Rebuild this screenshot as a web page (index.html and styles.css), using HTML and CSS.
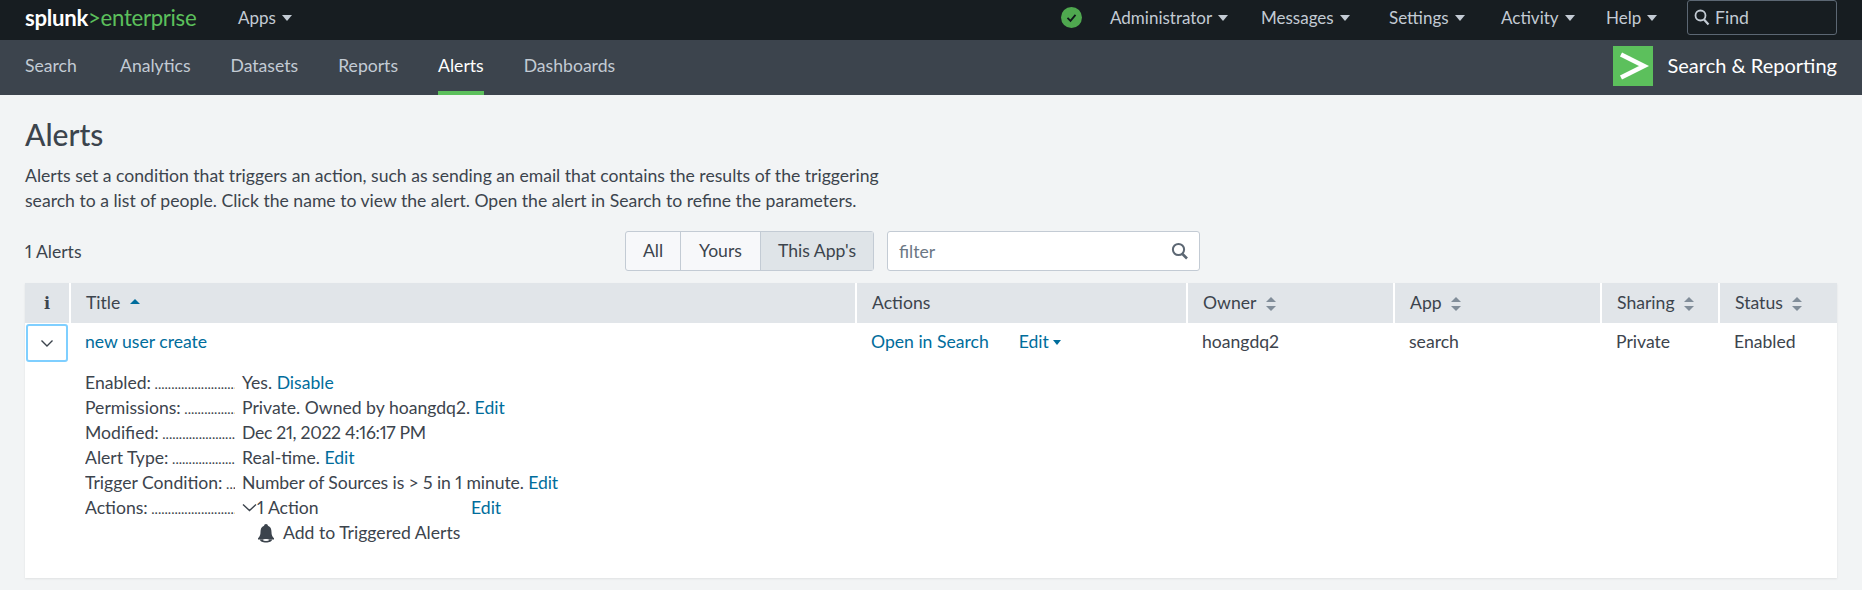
FILE: index.html
```html
<!DOCTYPE html>
<html lang="en">
<head>
    <meta charset="UTF-8">
    <meta name="viewport" content="width=device-width, initial-scale=1.0">
    <title>Alerts | Splunk</title>
    <link rel="stylesheet" href="styles.css">
</head>
<body>
    <header class="topbar">
        <a class="logo"><b>splunk</b><span>&gt;enterprise</span></a>
        <a class="top-link apps">Apps <i class="caret"></i></a>
        <div class="top-right">
            <svg class="status-ok" width="21" height="21" viewBox="0 0 21 21"><circle cx="10.5" cy="10.5" r="10.5" fill="#4fa84f"/><path d="M6.5 10.8l3 3 5-6" fill="none" stroke="#10181c" stroke-width="1.8"/></svg>
            <a class="top-link admin">Administrator <i class="caret"></i></a>
            <a class="top-link messages">Messages <i class="caret"></i></a>
            <a class="top-link settings">Settings <i class="caret"></i></a>
            <a class="top-link activity">Activity <i class="caret"></i></a>
            <a class="top-link help">Help <i class="caret"></i></a>
            <div class="find">
                <svg width="16" height="17" viewBox="0 0 16 17"><circle cx="6.5" cy="6.5" r="5" fill="none" stroke="#c3cbd4" stroke-width="1.8"/><path d="M10 10.5l4.5 5" stroke="#c3cbd4" stroke-width="2.2"/></svg>
                <span>Find</span>
            </div>
        </div>
    </header>
    <nav class="appbar">
        <a class="nav-item first">Search</a>
        <a class="nav-item">Analytics</a>
        <a class="nav-item">Datasets</a>
        <a class="nav-item">Reports</a>
        <a class="nav-item active">Alerts</a>
        <a class="nav-item">Dashboards</a>
        <div class="app-name">
            <div class="app-logo"><svg width="40" height="40" viewBox="0 0 40 40"><path d="M8 8.5l23 11.5-23 11.5" fill="none" stroke="#fff" stroke-width="4.5"/></svg></div>
            <span>Search &amp; Reporting</span>
        </div>
    </nav>
    <main class="page">
        <h1>Alerts</h1>
        <p class="intro">Alerts set a condition that triggers an action, such as sending an email that contains the results of the triggering<br>search to a list of people. Click the name to view the alert. Open the alert in Search to refine the parameters.</p>
        <div class="controls">
            <div class="count">1 Alerts</div>
            <div class="btn-group">
                <button class="btn btn-all">All</button>
                <button class="btn btn-yours">Yours</button>
                <button class="btn btn-app selected">This App's</button>
            </div>
            <div class="filter">
                <span>filter</span>
                <svg width="18" height="18" viewBox="0 0 18 18"><circle cx="7.5" cy="7.5" r="5.6" fill="none" stroke="#5c6773" stroke-width="2"/><path d="M11.5 12l4.5 4.5" stroke="#5c6773" stroke-width="2.6"/></svg>
            </div>
        </div>
        <table class="alerts">
            <colgroup>
                <col class="c-info"><col class="c-title"><col class="c-actions"><col class="c-owner"><col class="c-app"><col class="c-sharing"><col class="c-status">
            </colgroup>
            <thead>
                <tr>
                    <th class="info-head">i</th>
                    <th>Title <i class="sort-up"></i></th>
                    <th>Actions</th>
                    <th>Owner <i class="sort"></i></th>
                    <th>App <i class="sort"></i></th>
                    <th>Sharing <i class="sort"></i></th>
                    <th>Status <i class="sort"></i></th>
                </tr>
            </thead>
            <tbody>
                <tr class="main-row">
                    <td class="toggle-cell">
                        <div class="toggle"><svg width="14" height="9" viewBox="0 0 14 9"><path d="M1.5 1.5L7 7l5.5-5.5" fill="none" stroke="#3c444d" stroke-width="1.4"/></svg></div>
                    </td>
                    <td><a class="link">new user create</a></td>
                    <td class="actions-cell"><a class="link open">Open in Search</a><a class="link">Edit <i class="caret blue"></i></a></td>
                    <td>hoangdq2</td>
                    <td>search</td>
                    <td>Private</td>
                    <td>Enabled</td>
                </tr>
                <tr class="more-row">
                    <td></td>
                    <td colspan="6">
                        <dl class="details">
                            <dt>Enabled:</dt><dd>Yes. <a class="link">Disable</a></dd>
                            <dt>Permissions:</dt><dd>Private. Owned by hoangdq2. <a class="link">Edit</a></dd>
                            <dt>Modified:</dt><dd class="date">Dec 21, 2022 4:16:17 PM</dd>
                            <dt>Alert Type:</dt><dd>Real-time. <a class="link">Edit</a></dd>
                            <dt>Trigger Condition:</dt><dd class="trigger">Number of Sources is &gt; 5 in 1 minute. <a class="link">Edit</a></dd>
                            <dt>Actions:</dt>
                            <dd>
                                <div class="action-line">
                                    <svg width="15" height="9" viewBox="0 0 15 9"><path d="M1 1.5l6.5 6 6.5-6" fill="none" stroke="#3c444d" stroke-width="1.4"/></svg>
                                    <span class="action-count">1 Action</span>
                                    <a class="link">Edit</a>
                                </div>
                                <div class="action-item">
                                    <svg width="18" height="20" viewBox="0 0 18 20"><path d="M9 1c1.2 0 1.8.8 1.9 1.7C13.6 3.5 14.5 6 14.5 9c0 3 .7 4.5 2.5 6.3v1.2H1v-1.2C2.8 13.5 3.5 12 3.5 9c0-3 .9-5.5 3.6-6.3C7.2 1.800 7.800 1 9 1z" fill="#3c444d"/><path d="M3 16.5h12c0 1.8-2.500 3-6 3s-6-1.200-6-3z" fill="#3c444d"/><ellipse cx="9" cy="17" rx="3" ry="1" fill="#fff"/></svg>
                                    <span>Add to Triggered Alerts</span>
                                </div>
                            </dd>
                        </dl>
                    </td>
                </tr>
            </tbody>
        </table>
    </main>
</body>
</html>
```

FILE: styles.css
```css
* {
    box-sizing: border-box;
}
html, body {
    height: 100%;
}
body {
    margin: 0;
    background-color: #f2f4f5;
    color: #3c444d;
    font-family: Lato, "Open Sans", sans-serif;
    font-size: 17.6px;
    font-variant-numeric: proportional-nums;
    overflow: hidden;
}
i {
    font-style: normal;
}
.topbar {
    display: flex;
    align-items: center;
    height: 40px;
    padding: 0 25px 5px;
    background-color: #171d21;
    color: #c3cbd4;
}
.logo {
    width: 213px;
    font-size: 22.2px;
    color: #5cc05c;
    letter-spacing: -0.3px;
}
.logo b {
    color: #fff;
    font-weight: 700;
}
.top-link {
    display: inline-flex;
    align-items: center;
    gap: 6px;
    color: #c3cbd4;
    font-size: 17px;
    white-space: nowrap;
}
.caret {
    display: inline-block;
    width: 0;
    height: 0;
    border-left: 5px solid transparent;
    border-right: 5px solid transparent;
    border-top: 6px solid #c3cbd4;
}
.caret.blue {
    border-left-width: 4.5px;
    border-right-width: 4.5px;
    border-top: 5px solid #006d9c;
    vertical-align: 3px;
}
.top-right {
    display: flex;
    align-items: center;
    margin-left: auto;
}
.status-ok {
    margin-right: 28px;
}
.admin {
    width: 151px;
}
.messages {
    width: 128px;
}
.settings {
    width: 112px;
}
.activity {
    width: 105px;
}
.help {
    width: 81px;
}
.find {
    display: flex;
    align-items: center;
    gap: 5px;
    width: 150px;
    height: 35px;
    padding-left: 6px;
    border: 1px solid #5c6773;
    border-radius: 3px;
}
.appbar {
    display: flex;
    height: 55px;
    padding: 0 25px;
    background-color: #3c444d;
    gap: 40px;
}
.nav-item {
    height: 55px;
    padding-top: 15px;
    color: #c3cbd4;
}
.nav-item.first {
    min-width: 55px;
}
.nav-item.active {
    color: #fff;
    border-bottom: 4px solid #5cc05c;
}
.app-name {
    display: flex;
    align-items: center;
    gap: 15px;
    margin-left: auto;
    padding-bottom: 3px;
    color: #fff;
    font-size: 20px;
}
.app-name span {
    padding-bottom: 2px;
}
.app-logo {
    width: 40px;
    height: 40px;
    background-color: #5cc05c;
}
.page {
    padding: 21px 25px 0;
}
h1 {
    margin: 0;
    font-size: 30px;
    font-weight: 500;
    line-height: 36px;
}
.intro {
    margin: 11px 0 0;
    line-height: 25px;
}
.controls {
    position: relative;
    display: flex;
    align-items: center;
    height: 40px;
    margin-top: 18px;
}
.count {
    width: 600px;
}
.btn-group {
    display: flex;
    height: 40px;
    border: 1px solid #c3cbd4;
    border-radius: 3px;
    background-color: #f7f8fa;
}
.btn {
    padding: 0 0 2px;
    border: 0;
    border-right: 1px solid #c3cbd4;
    background: none;
    color: #3c444d;
    font: inherit;
}
.btn-all {
    width: 55px;
}
.btn-yours {
    width: 80px;
}
.btn-app {
    width: 112px;
    border-right: 0;
}
.btn.selected {
    background-color: #dfe4e8;
}
.filter {
    display: flex;
    align-items: center;
    justify-content: space-between;
    width: 313px;
    height: 40px;
    margin-left: 13px;
    padding: 0 10px 0 11px;
    border: 1px solid #c3cbd4;
    border-radius: 3px;
    background-color: #fff;
    color: #6b7785;
}
.alerts {
    width: 1812px;
    height: 295px;
    margin-top: 12px;
    table-layout: fixed;
    border-collapse: collapse;
    background-color: #fff;
    box-shadow: 0 1px 2px rgba(0, 0, 0, 0.08);
}
.c-info {
    width: 45px;
}
.c-title {
    width: 786px;
}
.c-actions {
    width: 331px;
}
.c-owner {
    width: 207px;
}
.c-app {
    width: 207px;
}
.c-sharing {
    width: 118px;
}
.c-status {
    width: 118px;
}
th {
    height: 40px;
    padding: 0 15px 2px;
    background-color: #e1e5e9;
    border-left: 2px solid #fff;
    font-weight: 400;
    text-align: left;
}
th:first-child {
    border-left: 0;
}
.info-head {
    padding: 0;
    font-family: "DejaVu Serif", serif;
    font-size: 16px;
    font-weight: 700;
    text-align: center;
}
td {
    padding: 0 15px;
    vertical-align: top;
}
.main-row td {
    height: 40px;
    padding-top: 8px;
}
.main-row .toggle-cell {
    padding: 1px 0 0 1px;
}
.toggle {
    display: flex;
    align-items: center;
    justify-content: center;
    width: 42px;
    height: 38px;
    border: 2px solid #7fcfff;
    border-radius: 3px;
}
.link {
    color: #006d9c;
}
.open {
    margin-right: 30px;
}
.sort-up {
    display: inline-block;
    width: 0;
    height: 0;
    margin-left: 5px;
    vertical-align: 5px;
    border-left: 5px solid transparent;
    border-right: 5px solid transparent;
    border-bottom: 5px solid #006d9c;
}
.sort {
    display: inline-block;
    position: relative;
    width: 10px;
    height: 14px;
    margin-left: 5px;
    vertical-align: -2px;
}
.sort::before,
.sort::after {
    content: "";
    position: absolute;
    left: 0;
    border-left: 5px solid transparent;
    border-right: 5px solid transparent;
}
.sort::before {
    top: 0;
    border-bottom: 5px solid #818d99;
}
.sort::after {
    bottom: 0;
    border-top: 5px solid #818d99;
}
.more-row td {
    padding-top: 7px;
}
.details {
    display: grid;
    grid-template-columns: 150px 1fr;
    column-gap: 7px;
    grid-auto-rows: 25px;
    margin: 0;
    line-height: 25px;
}
.details dt {
    overflow: hidden;
    white-space: nowrap;
}
.details dt::after {
    content: " ..................................................";
    font-size: 14px;
}
.details dd {
    margin: 0;
}
.details .date {
    letter-spacing: -0.3px;
}
.details .trigger {
    letter-spacing: -0.1px;
}
.action-line {
    display: flex;
    align-items: center;
}
.action-count {
    width: 214px;
}
.action-item {
    display: flex;
    align-items: center;
    gap: 8px;
    padding-left: 15px;
    height: 25px;
}
```
